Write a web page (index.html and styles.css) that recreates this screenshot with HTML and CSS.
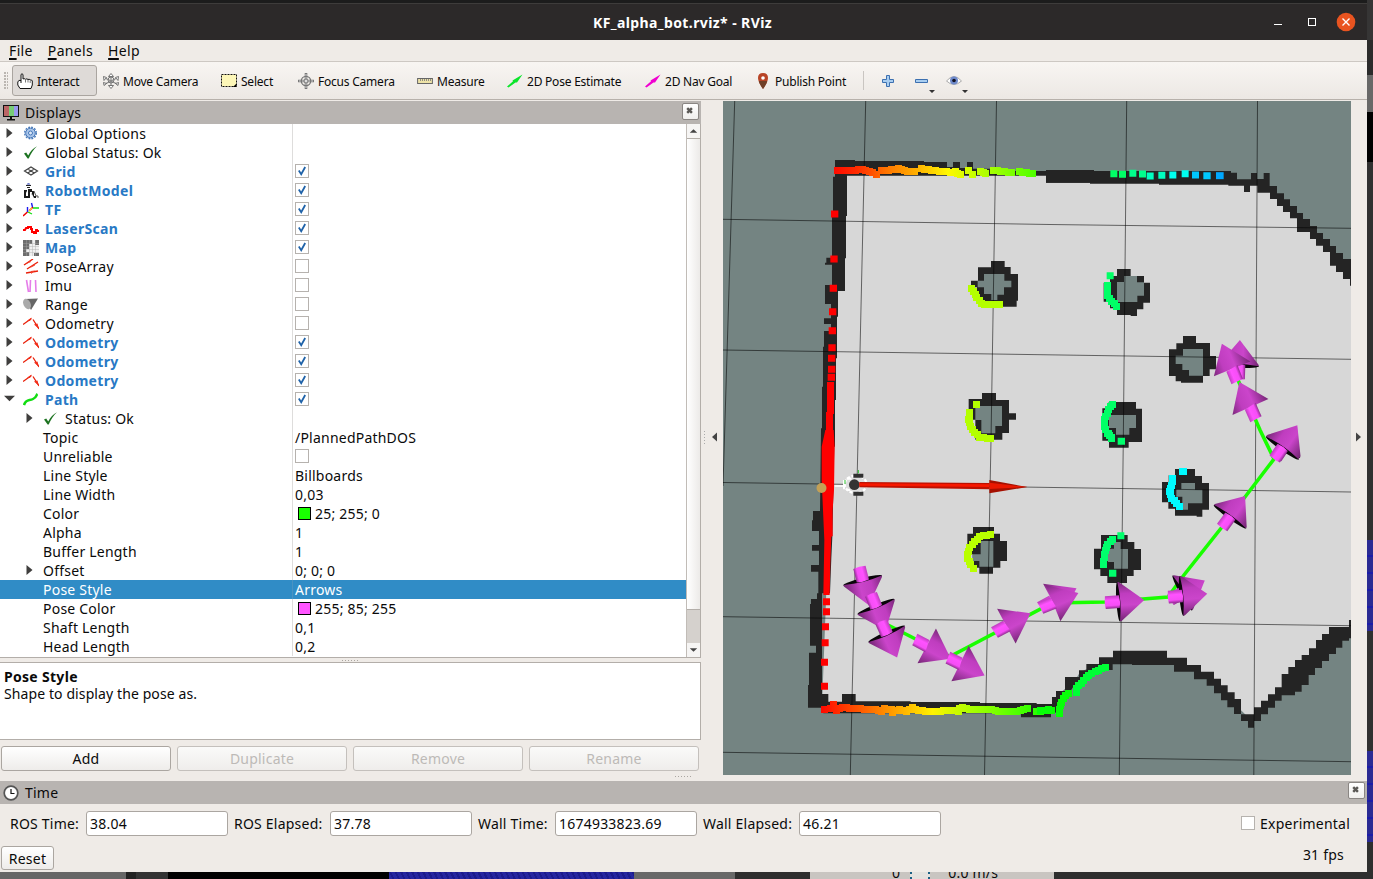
FILE: index.html
```html
<!DOCTYPE html>
<html lang="en">
<head>
<meta charset="utf-8">
<title>KF_alpha_bot.rviz* - RViz</title>
<link rel="stylesheet" href="styles.css">
</head>
<body>
<svg class="defs" width="0" height="0">
  <defs>
    <symbol id="right" viewBox="0 0 6 10"><path d="M0 0L6 5L0 10z" fill="#3f3e3d"/></symbol>
    <symbol id="down" viewBox="0 0 10 6"><path d="M0 0H10L5 5z" fill="#3f3e3d"/></symbol>
    <symbol id="x" viewBox="0 0 16 16"><path d="M4.500 4.500L9.500 9.500M9.500 4.500L4.500 9.500" stroke="#5b5956" stroke-width="2.6"/></symbol>
    <symbol id="tick" viewBox="0 0 12 12"><path d="M2.800 5.600L5.200 9.200L9.200 2" fill="none" stroke="#1f62a8" stroke-width="1.800"/></symbol>
    <symbol id="gear" viewBox="0 0 16 16"><circle cx="7.5" cy="7" r="4.800" fill="#a9c5ea" stroke="#4577b8" stroke-width="1"/><circle cx="7.5" cy="7" r="5.800" fill="none" stroke="#4577b8" stroke-width="1.400" stroke-dasharray="1.800 1.240"/><circle cx="7.5" cy="7" r="2" fill="#dce8f8" stroke="#4577b8"/></symbol>
    <symbol id="ok" viewBox="0 0 16 16"><path d="M1 8.5L3.2 7.4L5.2 10.4C7.5 6 10 3.2 14 1.2C10.500 4.500 7.800 8.500 5.700 13.500H4.600z" fill="#1d7321"/></symbol>
    <symbol id="grid" viewBox="0 0 16 16"><path d="M1.500 7L8 3L14.500 7L8 11zM4.700 5L11.300 9M11.300 5L4.700 9" fill="none" stroke="#444" stroke-width="1.200"/></symbol>
    <symbol id="robot" viewBox="0 0 16 16"><path d="M3.500 1.500Q5.500-.8 7.500 1.500z" fill="#2a3fae"/><path d="M3 2.500h5M4 4.500h3" stroke="#222"/><path d="M1 7h3v2H3v4h2v2H1zM5 6h4v3H7v6H5zM9 8h2v5h2v2h-2l-2-4z" fill="#1b1b1b"/><path d="M11 8l2 5h2v2" stroke="#555" fill="none"/><path d="M3 9h1M8 11h1" stroke="#aaa"/></symbol>
    <symbol id="tf" viewBox="0 0 16 16"><path d="M0 14L4.500 10M6 9L10 5" stroke="#f10000" stroke-width="1.500"/><path d="M4.500 10V5M9.500 5L8.500 1" stroke="#1b1bf0" stroke-width="1.400"/><path d="M5 10L9 12M10 6H16" stroke="#14e014" stroke-width="1.300"/><path d="M6 9L9 6" stroke="#ffe000"/></symbol>
    <symbol id="laser" viewBox="0 0 16 16"><path d="M0 9L2 9L3 7H5V6H8V8H9V11H11V12H13V9H14V10H16" fill="none" stroke="#f00" stroke-width="2"/></symbol>
    <symbol id="map" viewBox="0 0 16 16"><path d="M0 0h16v16H0z" fill="#f0f0f0"/><path d="M0 0h9v4H6v5H3v3h3v4H0zM12 0h4v5h-4zM11 13h5v3h-5z" fill="#6d6d6d"/><path d="M3.500 0v16M6.500 0v16M9.500 0v16M12.500 0v16M0 3.500h16M0 6.500h16M0 9.500h16M0 12.500h16" stroke="#aaa" stroke-width=".4"/></symbol>
    <symbol id="poses" viewBox="0 0 16 16"><path d="M1 6L10 0M4 10L15 3M3 14L15 12" stroke="#e9210b" stroke-width="1.400"/><path d="M3 5L7 1.800L8 3zM7 9L11 5L12 6.500zM8 12L12 11.500L8 15z" fill="#f4402c"/></symbol>
    <symbol id="imu" viewBox="0 0 16 16"><path d="M3.500 2L5.500 14M7.500 2L7 14M12.500 2L13 14" stroke="#e57de9" stroke-width="1.600"/></symbol>
    <symbol id="range" viewBox="0 0 16 16"><path d="M2 2L15 1.500L8 13z" fill="#666"/><ellipse cx="4" cy="7" rx="3.500" ry="5.500" transform="rotate(-25 4 7)" fill="#aaa"/></symbol>
    <symbol id="odom" viewBox="0 0 16 16"><path d="M0 8.500L8.500 2.500M10 3.500L16 13" stroke="#e9210b" stroke-width="1.300"/><path d="M4 4.800L8.700 1.500L7 5zM11 8.500L14.500 7.500L16 13z" fill="#f22d18"/></symbol>
    <symbol id="path" viewBox="0 0 16 16"><path d="M1 13C3 7 6 9 10 7S13 3 14.500 2" fill="none" stroke="#12dd12" stroke-width="2.500"/></symbol>
    <symbol id="pose2" viewBox="0 0 16 16"><path d="M0 13.500L6 8.300L5.500 7.500L15.500 1.500L10 9.500L8.500 9.500L1.500 14.500z"/></symbol>
    <symbol id="cross" viewBox="0 0 16 16"><path d="M8 0v16M0 8h16" stroke="#777" stroke-width="2.600"/><path d="M8 1v14M1 8h14" stroke="#ddd"/><circle cx="8" cy="8" r="4.700" fill="none" stroke="#777" stroke-width="1.300"/><circle cx="8" cy="8" r="2" fill="#ddd" stroke="#777"/></symbol>
    <linearGradient id="cone" x1="0" y1="-58" x2="0" y2="58" gradientUnits="userSpaceOnUse"><stop offset="0" stop-color="#7c2a7c"/><stop offset=".3" stop-color="#bf3dbf"/><stop offset=".6" stop-color="#cb45cb"/><stop offset="1" stop-color="#752675"/></linearGradient>
    <linearGradient id="shaft" x1="0" y1="-20" x2="0" y2="20" gradientUnits="userSpaceOnUse"><stop offset="0" stop-color="#b83bb8"/><stop offset=".35" stop-color="#ff52ff"/><stop offset=".75" stop-color="#f64ef6"/><stop offset="1" stop-color="#852a85"/></linearGradient>
    <g id="arrow"><ellipse rx="7" ry="60" fill="#090509"/><path d="M0-59Q10 0 0 59L4 59L77 0L4-59z" fill="url(#cone)"/><path d="M-40-19H2Q6 0 2 19H-40Q-44 0-40-19z" fill="url(#shaft)"/></g>
    <g id="flat"><path d="M-1-59L81 0L-1 59z" fill="url(#cone)"/><path d="M-43-19H-2L4 19H-40z" fill="url(#shaft)"/></g>
    <linearGradient id="lasertop" x1="330" y1="0" x2="950" y2="0" gradientUnits="userSpaceOnUse"><stop offset="0" stop-color="#ff0500"/><stop offset=".13" stop-color="#ff2c00"/><stop offset=".28" stop-color="#ff7800"/><stop offset=".42" stop-color="#ffb000"/><stop offset=".57" stop-color="#fff800"/><stop offset=".7" stop-color="#c5ff00"/><stop offset="1" stop-color="#4cff00"/></linearGradient>
    <linearGradient id="laserbot" x1="303" y1="0" x2="1000" y2="0" gradientUnits="userSpaceOnUse"><stop offset="0" stop-color="#ff0800"/><stop offset=".15" stop-color="#ff5000"/><stop offset=".31" stop-color="#ff9e00"/><stop offset=".48" stop-color="#fff200"/><stop offset=".65" stop-color="#a8ff00"/><stop offset="1" stop-color="#08ff00"/></linearGradient>
  </defs>
</svg>

<div class="desktop">
  <div class="window">
    <header class="titlebar">
      <span class="title">KF_alpha_bot.rviz* - RViz</span>
      <svg class="wm" width="90" height="22" viewBox="0 0 90 22"><path d="M8 13.500h8" stroke="#fff"/><rect x="42.500" y="7.500" width="7" height="7" fill="none" stroke="#fff"/><circle cx="80" cy="11" r="9.300" fill="#e95420"/><path d="M76.500 7.500l7 7M83.500 7.500l-7 7" stroke="#fff" stroke-width="1.400"/></svg>
    </header>
    <nav class="menubar"><span><u>F</u>ile</span><span><u>P</u>anels</span><span><u>H</u>elp</span></nav>
    <div class="toolbar">
      <div class="grip"></div>
      <div class="tool active w85"><svg width="16" height="16" viewBox="0 0 16 16"><path d="M4 10V1.500Q5 0 6 1.500V6Q7 5 8.500 6.300Q10 5.300 11 6.500Q12.500 5.700 13 7Q15 6.500 15.300 8V12L14 15.500H3L.8 12V9Q1.500 6.500 4 7.500" fill="#fff" stroke="#111" stroke-width="1"/><path d="M8.500 6.500v3M11 7v2.500M13.200 7.500V10" stroke="#777"/></svg><span>Interact</span></div>
      <div class="tool w118"><svg width="16" height="16" viewBox="0 0 16 16"><path d="M8 2v12M2 5L14 11M14 5L2 11" stroke="#888" stroke-width="1.200"/><path d="M8 .5L10.500 3.500h-5zM8 15.500l2.500-3h-5zM.5 3.500l3 1L1 7.500zM15.500 3.500l-3 1L15 7.500zM.5 9.500l3 1L1 12.500zM15.500 9.500l-3 1L15 12.500z" fill="#fff" stroke="#555" stroke-width=".8"/><circle cx="8" cy="7" r="3" fill="none" stroke="#777"/></svg><span>Move Camera</span></div>
      <div class="tool w77"><svg width="16" height="16" viewBox="0 0 16 16"><rect x=".5" y="1.500" width="15" height="12" fill="#fdf7b8" stroke="#111" stroke-dasharray="2 1"/><path d="M15.500 10.500v3.500H12z"/></svg><span>Select</span></div>
      <div class="tool w119"><svg width="16" height="16"><use href="#cross"/></svg><span>Focus Camera</span></div>
      <div class="tool w90"><svg width="16" height="16" viewBox="0 0 16 16"><rect x=".6" y="5.500" width="14.800" height="5" fill="#eee3a8" stroke="#666"/><path d="M3.500 6v2M5.500 6v2M7.500 6v2M9.500 6v2M11.500 6v2M13.500 6v2" stroke="#777" stroke-width=".8"/></svg><span>Measure</span></div>
      <div class="tool w138"><svg width="16" height="16" fill="#0be52b"><use href="#pose2"/></svg><span>2D Pose Estimate</span></div>
      <div class="tool w110"><svg width="16" height="16" fill="#f000d0"><use href="#pose2"/></svg><span>2D Nav Goal</span></div>
      <div class="tool w113"><svg width="16" height="16" viewBox="0 0 16 16"><path d="M8 16Q3 9 3 5Q3 0 8 0T13 5Q13 9 8 16z" fill="#b84426"/><path d="M8 16Q4.500 11 3.800 8H12.200Q11.500 11 8 16z" fill="#704028"/><circle cx="8" cy="5" r="1.800" fill="#fff"/></svg><span>Publish Point</span></div>
      <div class="sep"></div>
      <svg class="extras" width="106" height="26" viewBox="0 0 106 26"><path d="M22.500 7.500h3v4h4v3h-4v4h-3v-4h-4v-3h4z" fill="#a8cdf0" stroke="#3d70b0"/><path d="M51.500 11.500h12v3h-12z" fill="#a8cdf0" stroke="#3d70b0"/><path d="M65 22h6l-3 3zM98 22h6l-3 3z" fill="#333"/><path d="M82.500 13Q90 4 97.500 13Q90 20 82.500 13z" fill="#fff" stroke="#aaa"/><circle cx="90" cy="12.500" r="4" fill="#6f8acb"/><circle cx="90" cy="12.500" r="1.800" fill="#112"/></svg>
    </div>

    <main class="work">
      <section class="displays">
        <div class="dockhead"><svg width="18" height="18" viewBox="0 0 18 18"><path d="M1 1h16v12H1z" fill="#111"/><path d="M2 2h5v10H2z" fill="#b66"/><path d="M7 2h5v10H7z" fill="#7c7"/><path d="M12 2h4v10h-4z" fill="#99e"/><path d="M8 13h2v2h3v1.500H5V15h3z" fill="#111"/></svg><span>Displays</span><svg class="close" width="17" height="17"><use href="#x"/></svg></div>
        <div class="treebox">
          <div class="tree">
            <div class="row"><div class="name"><svg class="exp"><use href="#right"/></svg><svg class="ico"><use href="#gear"/></svg>Global Options</div><div class="val"></div></div>
            <div class="row"><div class="name"><svg class="exp"><use href="#right"/></svg><svg class="ico"><use href="#ok"/></svg>Global Status: Ok</div><div class="val"></div></div>
            <div class="row"><div class="name on"><svg class="exp"><use href="#right"/></svg><svg class="ico"><use href="#grid"/></svg>Grid</div><div class="val"><svg class="box"><use href="#tick"/></svg></div></div>
            <div class="row"><div class="name on"><svg class="exp"><use href="#right"/></svg><svg class="ico"><use href="#robot"/></svg>RobotModel</div><div class="val"><svg class="box"><use href="#tick"/></svg></div></div>
            <div class="row"><div class="name on"><svg class="exp"><use href="#right"/></svg><svg class="ico"><use href="#tf"/></svg>TF</div><div class="val"><svg class="box"><use href="#tick"/></svg></div></div>
            <div class="row"><div class="name on"><svg class="exp"><use href="#right"/></svg><svg class="ico"><use href="#laser"/></svg>LaserScan</div><div class="val"><svg class="box"><use href="#tick"/></svg></div></div>
            <div class="row"><div class="name on"><svg class="exp"><use href="#right"/></svg><svg class="ico"><use href="#map"/></svg>Map</div><div class="val"><svg class="box"><use href="#tick"/></svg></div></div>
            <div class="row"><div class="name"><svg class="exp"><use href="#right"/></svg><svg class="ico"><use href="#poses"/></svg>PoseArray</div><div class="val"><svg class="box"></svg></div></div>
            <div class="row"><div class="name"><svg class="exp"><use href="#right"/></svg><svg class="ico"><use href="#imu"/></svg>Imu</div><div class="val"><svg class="box"></svg></div></div>
            <div class="row"><div class="name"><svg class="exp"><use href="#right"/></svg><svg class="ico"><use href="#range"/></svg>Range</div><div class="val"><svg class="box"></svg></div></div>
            <div class="row"><div class="name"><svg class="exp"><use href="#right"/></svg><svg class="ico"><use href="#odom"/></svg>Odometry</div><div class="val"><svg class="box"></svg></div></div>
            <div class="row"><div class="name on"><svg class="exp"><use href="#right"/></svg><svg class="ico"><use href="#odom"/></svg>Odometry</div><div class="val"><svg class="box"><use href="#tick"/></svg></div></div>
            <div class="row"><div class="name on"><svg class="exp"><use href="#right"/></svg><svg class="ico"><use href="#odom"/></svg>Odometry</div><div class="val"><svg class="box"><use href="#tick"/></svg></div></div>
            <div class="row"><div class="name on"><svg class="exp"><use href="#right"/></svg><svg class="ico"><use href="#odom"/></svg>Odometry</div><div class="val"><svg class="box"><use href="#tick"/></svg></div></div>
            <div class="row"><div class="name on"><svg class="exp"><use href="#down"/></svg><svg class="ico"><use href="#path"/></svg>Path</div><div class="val"><svg class="box"><use href="#tick"/></svg></div></div>
            <div class="row"><div class="name sub"><svg class="exp"><use href="#right"/></svg><svg class="ico"><use href="#ok"/></svg>Status: Ok</div><div class="val"></div></div>
            <div class="row"><div class="name leaf">Topic</div><div class="val">/PlannedPathDOS</div></div>
            <div class="row"><div class="name leaf">Unreliable</div><div class="val"><svg class="box"></svg></div></div>
            <div class="row"><div class="name leaf">Line Style</div><div class="val">Billboards</div></div>
            <div class="row"><div class="name leaf">Line Width</div><div class="val">0,03</div></div>
            <div class="row"><div class="name leaf">Color</div><div class="val"><i class="swatch green"></i>25; 255; 0</div></div>
            <div class="row"><div class="name leaf">Alpha</div><div class="val">1</div></div>
            <div class="row"><div class="name leaf">Buffer Length</div><div class="val">1</div></div>
            <div class="row"><div class="name sub"><svg class="exp"><use href="#right"/></svg>Offset</div><div class="val">0; 0; 0</div></div>
            <div class="row selected"><div class="name leaf">Pose Style</div><div class="val">Arrows</div></div>
            <div class="row"><div class="name leaf">Pose Color</div><div class="val"><i class="swatch pink"></i>255; 85; 255</div></div>
            <div class="row"><div class="name leaf">Shaft Length</div><div class="val">0,1</div></div>
            <div class="row"><div class="name leaf">Head Length</div><div class="val">0,2</div></div>
          </div>
          <div class="scroll">
            <svg class="sbtn" viewBox="0 0 14 14"><path d="M3 9h8L7 5z" fill="#444"/></svg>
            <div class="thumb"></div>
            <div class="rest"></div>
            <svg class="sbtn" viewBox="0 0 14 14"><path d="M3 5h8L7 9z" fill="#444"/></svg>
          </div>
        </div>
        <div class="split"><i class="dots"></i></div>
        <div class="help"><b>Pose Style</b><p>Shape to display the pose as.</p></div>
        <div class="buttons"><span class="btn">Add</span><span class="btn off">Duplicate</span><span class="btn off">Remove</span><span class="btn off">Rename</span></div>
        <div class="dotrow"><i class="dots"></i></div>
      </section>
      <div class="handle"><svg width="22" height="16" viewBox="0 0 22 16"><path d="M16 3.500V12.500L11 8z" fill="#444"/><path d="M3.500 2v13" stroke="#aaa" stroke-dasharray="1 2"/></svg></div>

      <svg class="view" width="628" height="674" viewBox="723 101 628 674">
        <path d="M838 168L1040 174L1262 185L1273 190L1300 222L1327 243L1351 273V625L1251 720L1205 675L1160 659H1110L1080 672L1058 710L822 706L826 600L834 330L842 180z" fill="#d7d7d7"/>
        <!-- occupied cells -->
        <g fill="#242424" transform="translate(720 100) scale(.333333)">
          <path d="M345 180h60v3h207v3h69v15h18v-15h21v18h21v-18h18v20h60v7h172V210H990h132v3H1533V248L978 248V227H381V348h-3V475h-3V573h-21V650h-3V775h-3V900h-3V1040H303V985h3V860h3V740h3V693h21V672H312V655H333V612H315V555H336V494H315V488h4V473h17V350h3V230h6z"/>
          <path d="M813 483h41v18h18v21h22v80h-4v18h-42v-10h-77v-48h-18v-20h21v-40h39z"/>
          <path d="M786 879h42v21h39v40h21v19h-21v40h-20v20h-81v-60h-20v-62h40z"/>
        </g>
        <g fill="#242424" transform="translate(1040 100) scale(.333333)">
          <path d="M18 210H162V213H553V237H573V218h18v20h42v-19h18v18h20v-18h18v39H711V280H732V298H750V318H771V339H789V357H810V378H831V399H849V417H870V438H888V459H909V477H933V557H930V537H909V516H888V497H870V456H849V437H828V417H810V396H771V355H750V336H729V318H711V297H690V278H652V257H630V276H612V257H565V254H357V251H150V248H18z"/>
          <path d="M231 507h41v21h40v20h18v60h-20v20h-19v20h-19v-3h-41v-20h-21v-20h-19v-57h19v-20h21z"/>
          <path d="M429 708h39v21h42v39h18v40h-19v20h-20v20h-66v-4h-16v-16h-20v-80h22v-18h20z"/>
          <path d="M206 906h82v20h18v100h-40v17h-59v-21h-20v-97h19z"/>
        </g>
        <g fill="#242424" transform="translate(720 430) scale(.333333)">
          <path d="M303 0L300 243H279V271H276V303H297V345H276V362H297V405H273V425H295V490H291V507H273V522H270V647H288V668H267V765H264V833H310V850H1000V822H950V819H780V816H572V814H407V792H366V815H325V792H306V490H330L334 383L337 320L344 0zM750 850H903V862H993V840H750z"/>
          <path d="M759 291h63v20h18v22h21v60h-20v20h-22v18h-41v-18h-20v-40h-16v-62h17z"/>
        </g>
        <g fill="#242424" transform="translate(1040 430) scale(.333333)">
          <path fill="#748482" d="M38 850L60 790L140 720L220 690H400L500 745L632 880L700 815L933 600V1035H0V862z"/>
          <path d="M0 822H36V801h12v-18h27v-42h42v-20h22v-19h38v-20h42v-20h162v21h60v22h42v20h39v21h21v20h20v21h21v20h19V853H642V832H663V812H684V793H705V772H725V732H745V711H765V690H785V675H807V655H828V630H846V612H867V591H888H927V570H933V625H927V632H907V653H888V672H867V693H846V714H825V735H806V765H785V785H765V796H725V812H705V833H684V853H663V873H642V893H624V873H603V852H582V832H562V811H543V790H522V767H500V748H462V725H402V705H276V703H218V720H180L100 770L60 830L45 850H33V862H0z"/>
          <path d="M405 117h60v21h21v21h21v80h-20v21h-17v-3h-65v-21h-20v-19h-19v-61h20v-20h19z"/>
          <path d="M183 315h80v21h20v21h20v63h-22v18h-20v21h-59v-21h-21v-20h-19v-62h21z"/>
        </g>
        <!-- unknown cells inside the pillars -->
        <g fill="#748482">
          <g transform="translate(720 100) scale(.333333)"><path d="M792 522h61v20h21v20h-22v22h-20v16h-18v-18h-22v-20h-19v-20h19zM766 918h80v60h-20v22h-42v-40h-18z"/></g>
          <g transform="translate(1040 100) scale(.333333)"><path d="M252 528h39v19h21v40h-20v19h-61v-60h21zM429 747h60v80h-42v-17h-20v-18h-20v-25h22zM207 945h81v39h-20v20h-40v-20h-21z"/></g>
          <g transform="translate(720 430) scale(.333333)"><path d="M782 333h38v77h-42v-17h-20v-20h24z"/></g>
          <g transform="translate(1040 430) scale(.333333)"><path d="M424 159h41v20h22v41h-43v19h-17v-39h-18v-22h15zM222 336h20v21h22v59h-42v-20h-18v-40h18z"/></g>
        </g>
        <path d="M734.700 101L723 486M865.700 101L858 440L850.300 775M996.500 101L991 440L984.500 775M1126.700 101L1123.300 440L1119.300 775M1257.500 101L1255.600 440L1253.800 775M723 219.300L1050 224.500L1351 228.300M723 350L1351 359.300M723 482.500L1351 492M723 616.700L1351 625.700M723 752.300L1351 761.700" fill="none" stroke="#000" stroke-opacity=".55"/>
        <!-- laser returns -->
        <g fill="none" stroke-width="21">
          <g transform="translate(720 100) scale(.333333)">
            <g fill="url(#lasertop)">
              <path class="scan" d="M352 212L380 211L432 209L455 217L468 222"/><path class="scan" d="M484 212L525 209"/><path class="scan" d="M534 206L560 213L584 214"/><path class="scan" d="M603 206L640 212L690 217"/><path class="scan" d="M705 215L722 223"/><path class="scan" d="M745 210L746 212"/><path class="scan" d="M757 224L758 224"/><path class="scan" d="M781 214L797 221"/><path class="scan" d="M820 211L875 218"/><path class="scan" d="M898 215L938 221"/>
            </g>
            <path stroke="#f00" d="M333 342h22M331 477h22M329 565h22M327 635h22M326 692h22M325 743h22M324 775h22M324 808h22M323 832h22"/>
            <path class="scan" data-step="16" fill="#f00" d="M332 855L331 920L328 980L328 1040"/>
            <g fill="#b4ff00"><path class="scan" d="M755 564L770 593L788 613L838 614"/><path class="scan" d="M769 914L770 914"/><path class="scan" d="M748 936L746 962L757 990L778 1011L812 1016"/></g>
          </g>
          <g transform="translate(1040 100) scale(.333333)">
            <g fill="#00ff66"><path class="scan" d="M201 556V580L208 597L230 618"/><path class="scan" d="M217 912L205 930L193 960V980L204 1002L215 1016"/></g>
            <path stroke="#00ff66" d="M211 221h21M237 223h21M200 527h21"/>
            <path stroke="#00ff8c" d="M268 220h21M297 222h21"/><path stroke="#00ffc0" d="M320 228h21M355 226h21"/><path stroke="#00fff0" d="M388 225h21M425 221h21"/><path stroke="#00c8ff" d="M456 225h21M490 227h22"/><path stroke="#00a8ff" d="M528 227h23"/>
          </g>
          <g transform="translate(720 430) scale(.333333)">
            <path fill="#f00" stroke="none" d="M316 0H341L344 50L342 180L338 240V318L334 320L331 400L329 495H310L313 330L309 240L305 150V50z"/>
            <path stroke="#f00" d="M309 515h21M309 545h21M306 590h21M305 638h21M303 697h21M303 769h21"/>
            <g fill="url(#laserbot)"><path class="scan" d="M314 837L330 834"/><path class="scan" d="M341 824V826"/><path class="scan" d="M349 842L360 833L400 835L475 840L483 845L495 835L517 840L518 848L535 838L560 844L577 832L590 842L640 845L700 840L715 845L722 832L760 840L810 838L830 844L900 843L922 836"/><path class="scan" d="M950 844L995 840"/></g>
            <g fill="#b9ff00"><path class="scan" d="M812 314L783 318L763 334L748 355L742 383L749 400L759 414"/></g>
          </g>
          <g transform="translate(1040 430) scale(.333333)">
            <g fill="#08ff08"><path class="scan" d="M0 842L25 838"/><path class="scan" d="M57 850L62 822L72 802L86 789"/></g>
            <g fill="#00ff35"><path class="scan" d="M108 787L113 768L130 753L150 732L196 712"/></g>
            <path stroke="#00ff6c" d="M233 34h22M232 317h21M207 430h22"/>
            <g fill="#00ff6c"><path class="scan" d="M218 328L202 345L193 368L191 404"/><path class="scan" d="M205 10L215 23"/></g>
            <g fill="#00fbff"><path class="scan" d="M428 125L429 125"/><path class="scan" d="M398 144L396 165L388 182L396 205L417 229"/></g>
          </g>
        </g>
        <circle cx="821.500" cy="488" r="5" fill="#c4a055"/>
        <!-- robot and its heading -->
        <g transform="translate(720 430) scale(.333333)">
          <path d="M344 168h26" stroke="#fff" stroke-width="5"/>
          <ellipse cx="407" cy="163" rx="33" ry="26" fill="#ddd" stroke="#fff" stroke-dasharray="9 5" stroke-width="7"/><path d="M372 150v28M380 146h14M380 180h10" stroke="#fff" stroke-width="6"/>
          <path d="M400 137h30M400 191h30" stroke="#303030" stroke-width="12"/><path d="M415 120v10M375 150v12" stroke="#29c52b" stroke-width="3"/>
          <circle cx="403" cy="164" r="16" fill="#333"/><path d="M418 156L808 159V178L418 172z" fill="#bd1000"/><path d="M418 160L808 163V171L418 167z" fill="#f71800"/>
          <path d="M808 150L922 171L808 190z" fill="#a51000"/><path d="M808 158L922 171L808 177z" fill="#e91800"/>
        </g>
        <path d="M888 625L950 656.500L1052 603L1105 602L1168 597L1184 575L1222 527L1245 497L1274 459L1260 430L1238 380" fill="none" stroke="#19ff00" stroke-width="3.600"/>
        <g transform="translate(720 430) scale(.333333)">
          <use href="#arrow" transform="translate(428 451) rotate(76)"/><use href="#arrow" transform="translate(468 530) rotate(68)"/><use href="#arrow" transform="translate(500 612) rotate(66)"/>
          <use href="#flat" transform="translate(621 648) rotate(28)"/><use href="#flat" transform="translate(721 701) rotate(26)"/><use href="#flat" transform="translate(860 588) rotate(-28)"/>
        </g>
        <g transform="translate(1040 430) scale(.333333)">
          <use href="#flat" transform="translate(38 513) rotate(-28)"/><use href="#flat" transform="translate(40 519) rotate(-22)"/>
          <use href="#arrow" transform="translate(236 515) rotate(-4)"/><use href="#arrow" transform="translate(427 489) rotate(-29)"/><use href="#arrow" transform="translate(425 498) rotate(-5)"/>
          <use href="#arrow" transform="translate(570 260) rotate(-54)"/><use href="#arrow" transform="translate(730 50) rotate(-57)"/><use href="#arrow" transform="translate(727 54) rotate(-55)"/>
        </g>
        <g transform="translate(1040 100) scale(.333333)">
          <use href="#flat" transform="translate(631 920) rotate(-114)"/><use href="#arrow" transform="translate(597 797) rotate(-88)"/><use href="#flat" transform="translate(576 806) rotate(-112)"/>
        </g>
      </svg>
      <div class="handle right"><svg width="16" height="16" viewBox="0 0 16 16"><path d="M5 3.500V12.500L10 8z" fill="#444"/></svg></div>
    </main>

    <section class="time">
      <div class="dockhead"><svg width="18" height="18" viewBox="0 0 18 18"><circle cx="9" cy="9" r="6.800" fill="#fff" stroke="#555" stroke-width="1.700"/><path d="M9 5v4.500H12.500" fill="none" stroke="#111" stroke-width="1.200"/></svg><span>Time</span><svg class="close" width="17" height="17"><use href="#x"/></svg></div>
      <div class="fields">
        <label class="l1">ROS Time:</label><span class="field">38.04</span>
        <label class="l2">ROS Elapsed:</label><span class="field">37.78</span>
        <label class="l3">Wall Time:</label><span class="field">1674933823.69</span>
        <label class="l4">Wall Elapsed:</label><span class="field">46.21</span>
        <span class="exper"><svg class="box"></svg>Experimental</span>
      </div>
      <div class="status"><span class="btn reset">Reset</span><span class="fps">31 fps</span></div>
    </section>
  </div>
  <div class="side"><i class="s1"></i><i class="s2"></i><i class="s3"></i><i class="s4"></i><i class="s5"></i><i class="s6"></i><i class="s7"></i><i class="s6"></i></div>
  <div class="under"><i class="u1"></i><i class="u2"></i><i class="u3"></i><i class="u4"></i><i class="u5"></i><i class="u6"></i><i class="u7"></i><div class="peek"><span>0</span><em></em><span>0.0 m/s</span></div></div>
</div>
<script src="scan.js"></script>
</body>
</html>
```

FILE: scan.js
```js
// Draws each laser trace as a run of square points along its path.
const SIZE = 21;
document.querySelectorAll('.scan').forEach(trace => {
  const step = Number(trace.dataset.step) || 11;
  const total = trace.getTotalLength();
  const count = Math.max(1, Math.round(total / step));
  for (let i = 0; i <= count; i++) {
    const p = trace.getPointAtLength(total * i / count);
    const point = document.createElementNS('http://www.w3.org/2000/svg', 'rect');
    point.setAttribute('x', Math.round((p.x - SIZE / 2) / 3) * 3);
    point.setAttribute('y', Math.round((p.y - SIZE / 2) / 3) * 3);
    point.setAttribute('width', SIZE);
    point.setAttribute('height', SIZE);
    point.setAttribute('fill', getComputedStyle(trace).fill);
    trace.before(point);
  }
  trace.remove();
});
```

FILE: styles.css
```css
* { box-sizing: border-box; }
body { margin: 0; width: 1373px; height: 879px; overflow: hidden; font: 14px/19px "Noto Sans", "Open Sans", sans-serif; letter-spacing: .22px; color: #0a0a0a; }
svg { display: block; flex: none; }
i { display: block; }
.defs { position: absolute; }
.desktop { display: grid; grid-template: 872px 7px / 1367px 6px; background: #2e2e2e; }
.window { display: flex; flex-direction: column; background: #efebe7; border-top: 3px solid #1c1c1c; overflow: hidden; }

.titlebar { display: flex; flex: none; height: 37px; align-items: center; background: #2c2929; border-top: 1px solid #3e3c3b; color: #fff; }
.title { width: 1267px; padding-left: 98px; text-align: center; font-size: 14px; font-weight: 700; letter-spacing: .4px; }
.wm { margin-left: -1px; }

.menubar { display: flex; flex: none; height: 22px; padding: 1px 9px 0; gap: 15px; border-bottom: 1px solid #cdc8c3; letter-spacing: .35px; }
.menubar u { text-underline-offset: 2px; text-decoration-thickness: 2px; }

.toolbar { display: flex; flex: none; height: 38px; align-items: center; background: linear-gradient(#f8f5f2, #ece8e4); border-bottom: 1px solid #b7b1ab; font-size: 12px; letter-spacing: -.22px; }
.grip { width: 4px; height: 18px; margin: 0 4px; background: radial-gradient(circle at 1px 1px, #bbb6b1 .8px, transparent 1px) 0 0 / 3px 3px; }
.tool { display: flex; flex: none; height: 31px; padding-left: 5px; gap: 4px; align-items: center; white-space: nowrap; }
.tool span { padding-top: 2px; }
.tool.active { margin-right: 1px; padding-left: 4px; background: #dedad7; border: 1px solid #aaa5a0; border-radius: 3px; }
.w85 { width: 85px; } .w118 { width: 118px; } .w77 { width: 77px; } .w119 { width: 119px; } .w90 { width: 90px; } .w138 { width: 138px; } .w110 { width: 110px; } .w113 { width: 113px; }
.sep { width: 1px; height: 19px; background: #c9c5c1; }

.work { display: grid; grid-template-columns: 701px 22px 628px 16px; height: 675px; flex: none; padding-top: 1px; }
.displays { display: flex; flex-direction: column; min-width: 0; }
.dockhead { display: flex; flex: none; height: 23px; align-items: center; padding: 0 2px; gap: 5px; background: #b8b4b1; }
.dockhead .close { margin: -2px 0 0 auto; background: linear-gradient(#fff, #f0efed); border: 1px solid #8a8683; border-radius: 2px; }
.treebox { display: flex; flex: none; height: 534px; background: #fff; border-bottom: 1px solid #b3aea9; border-right: 1px solid #b3aea9; }
.tree { width: 686px; }
.row { display: grid; grid-template-columns: 292px 1fr; height: 19px; line-height: 19px; white-space: nowrap; }
.name { display: flex; align-items: center; padding-left: 4px; }
.name.on { color: #2879c5; font-weight: 700; letter-spacing: .32px; }
.exp { width: 11px; height: 10px; margin: -1px 8px 0 0; }
.ico { width: 16px; height: 16px; margin-right: 6px; }
.sub { padding-left: 24px; }
.leaf { padding-left: 43px; }
.val { display: flex; align-items: center; padding-left: 2px; border-left: 1px solid #dedddc; }
.box { width: 14px; height: 14px; border: 1px solid #b6b2ae; background: #fff; }
.val .box { margin-top: -1px; }
.swatch { width: 13px; height: 13px; margin: 0 4px 0 3px; border: 1px solid #000; }
.green { background: #19ff00; } .pink { background: #ff55ff; }
.selected { background: #308cc6; color: #fff; }
.selected .val { border-color: #4a93c2; }
.scroll { display: flex; flex-direction: column; width: 14px; border-left: 1px solid #c1bcb7; background: #d5d1cd; }
.sbtn { width: 13px; height: 14px; background: #f6f5f4; }
.thumb { height: 472px; background: linear-gradient(90deg, #fff, #eceae8); border: solid #b3aea9; border-width: 1px 0; }
.rest { flex: 1; }
.split { display: flex; flex: none; height: 5px; justify-content: center; align-items: center; border-bottom: 1px solid #b3aea9; }
.dots { width: 18px; height: 1px; background: repeating-linear-gradient(90deg, #aaa6a1 0 1px, transparent 1px 3px); }
.help { flex: none; height: 77px; padding: 5px 4px; line-height: 17px; background: #fff; border: solid #b3aea9; border-width: 0 1px 1px 0; letter-spacing: .1px; }
.help b { display: block; letter-spacing: .3px; } .help p { margin: 0; }
.buttons { display: grid; grid-template-columns: repeat(4, 170px); gap: 6px; padding: 6px 1px 0; }
.btn { display: flex; height: 25px; align-items: center; justify-content: center; border: 1px solid #aba6a1; border-radius: 3px; background: linear-gradient(#fff, #eeecea); }
.off { color: #bdbab7; border-color: #c4c0bc; background: linear-gradient(#fafaf9, #efedeb); }
.dotrow { display: flex; height: 10px; align-items: center; justify-content: flex-end; padding-right: 8px; }
.handle { display: flex; align-items: center; padding-bottom: 8px; }
.view { background: #748482; }

.time { display: flex; flex-direction: column; padding-top: 6px; }
.time .close { margin-top: -4px; }
.fields { display: flex; align-items: center; height: 38px; padding-left: 10px; }
.fields label { flex: none; white-space: nowrap; }
.l1 { width: 76px; } .l2, .l3, .l4 { padding-left: 6px; }
.l2 { width: 102px; } .l3 { width: 83px; } .l4 { width: 102px; }
.field { width: 142px; height: 25px; padding: 2px 3px; background: #fff; border: 1px solid #aba6a1; border-radius: 3px; }
.exper { display: flex; gap: 5px; align-items: center; margin: 0 17px 0 auto; }
.exper .box { margin-top: -1px; }
.status { display: flex; justify-content: space-between; align-items: flex-end; height: 30px; padding: 0 23px 2px 1px; }
.reset { width: 53px; height: 24px; }
.fps { margin-bottom: 6px; }

.side { display: flex; flex-direction: column; }
.side i { flex: none; }
.s1 { height: 40px; background: #363535; } .s2 { height: 35px; background: #2b2b2b; } .s3 { height: 37px; background: #686868; } .s4 { height: 50px; background: #000; } .s5 { height: 378px; background: #303030; }
.s6 { height: 91px; background: repeating-linear-gradient(#2a2a93 0 15px, #1b1ba8 15px 17px); } .s7 { height: 120px; background: #303030; }
.under { grid-column: 1 / 3; display: flex; height: 7px; overflow: hidden; }
.u1 { width: 126px; background: #666; } .u2 { width: 10px; background: #222; } .u3 { width: 32px; background: #333; } .u4 { width: 221px; background: #000; } .u5 { width: 245px; background: repeating-linear-gradient(65deg, #2525a0 0 3px, #1b1b8c 3px 5px); } .u6 { width: 101px; background: #686868; } .u7 { width: 75px; background: #2e2e2e; }
.peek { display: flex; width: 244px; padding-left: 82px; background: #c9c5c1; line-height: 2px; }
.peek em { width: 20px; height: 7px; margin: 0 18px 0 10px; border: dotted #1b6085; border-width: 0 2px; background: #e4e1de; }
```
